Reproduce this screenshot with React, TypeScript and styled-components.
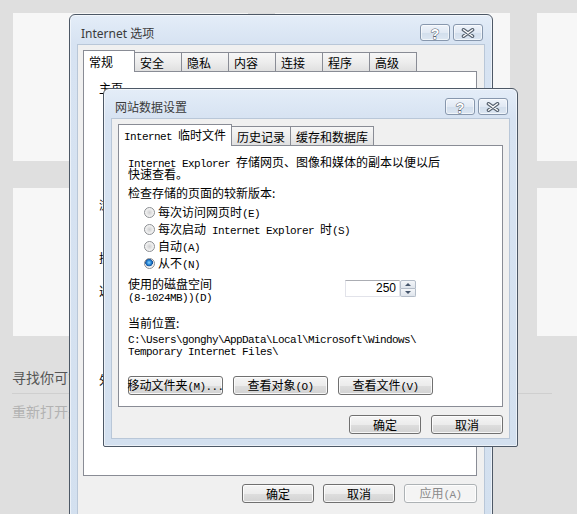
import styled, { createGlobalStyle } from "styled-components";

const GlobalStyle = createGlobalStyle`
  html, body {
    margin: 0;
    padding: 0;
    height: 100%;
    overflow: hidden;
  }
  body {
    background: #dfdfdf;
    font-family: "Noto Sans", "Noto Sans CJK SC", sans-serif;
  }
`;

const Desktop = styled.div`
  position: relative;
  width: 577px;
  height: 514px;
  overflow: hidden;
  background: #dfdfdf;
`;

/* new tab page behind the dialogs */
const Page = styled.div`
  padding: 13px 0 0 13px;
`;

const CardGrid = styled.div`
  display: grid;
  grid-template-columns: repeat(3, 235px);
  grid-auto-rows: 148px;
  gap: 27px;
`;

const Card = styled.div`
  background: #f7f7f7;
`;

const Section = styled.div`
  margin: 31px 0 0 -1px;
  width: 540px;
`;

const SectionTitle = styled.div`
  font-family: "Noto Sans CJK SC", sans-serif;
  font-size: 14px;
  line-height: 20px;
  color: #555;
`;

const Divider = styled.div`
  height: 1px;
  margin-top: 6px;
  background: #cfcfcf;
`;

const SectionHint = styled.div`
  margin-top: 7px;
  font-family: "Noto Sans CJK SC", sans-serif;
  font-size: 14px;
  line-height: 20px;
  color: #b2b2b2;
`;

/* dialog windows */
const Window = styled.div<{ $x: number; $y: number; $w: number; $h: number }>`
  position: absolute;
  left: ${(p) => p.$x}px;
  top: ${(p) => p.$y}px;
  width: ${(p) => p.$w}px;
  height: ${(p) => p.$h}px;
  box-sizing: border-box;
  display: flex;
  flex-direction: column;
  padding: 0 7px 7px;
  border: 1px solid #4d5866;
  border-radius: 6px 6px 2px 2px;
  background: linear-gradient(180deg, #e4edf8 0%, #d7e3f2 28px, #d3e0ef 100%);
  box-shadow: inset 0 0 0 1px rgba(255, 255, 255, 0.55);
  font-family: "Noto Sans CJK SC", sans-serif;
  color: #000;
`;

const TitleBar = styled.div`
  height: 29px;
  flex: none;
  display: flex;
  justify-content: space-between;
  align-items: flex-start;
  margin-right: 2px;
`;

const Caption = styled.div`
  padding: 10px 0 0 4px;
  font-family: "Noto Sans", "Noto Sans CJK SC", sans-serif;
  font-size: 12px;
  line-height: 17px;
  color: #3a3a3a;
`;

const CaptionButtons = styled.div`
  display: flex;
  gap: 3px;
  padding-top: 9px;
`;

const CaptionButton = styled.div`
  width: 30px;
  height: 17px;
  box-sizing: border-box;
  display: flex;
  align-items: center;
  justify-content: center;
  border: 1px solid #8797ad;
  border-radius: 3px;
  background: linear-gradient(180deg, #eef3fa 0%, #e1e9f4 50%, #d2deec 51%, #dce6f2 100%);
  box-shadow: inset 0 0 0 1px rgba(255, 255, 255, 0.6);
`;

const HelpGlyph = () => (
  <svg width="12" height="14" viewBox="0 0 12 14">
    <text
      x="6"
      y="12.5"
      textAnchor="middle"
      fontFamily="Liberation Sans, sans-serif"
      fontWeight="bold"
      fontSize="14"
      fill="#fff"
      stroke="#56616f"
      strokeWidth="1"
      paintOrder="stroke"
    >
      ?
    </text>
  </svg>
);

const CloseGlyph = () => (
  <svg width="14" height="10" viewBox="0 0 14 10">
    <path d="M2.5 1.8 L11.5 8.2 M11.5 1.8 L2.5 8.2" stroke="#56616f" strokeWidth="3.6" strokeLinecap="round" />
    <path d="M2.5 1.8 L11.5 8.2 M11.5 1.8 L2.5 8.2" stroke="#fff" strokeWidth="1.4" strokeLinecap="round" />
  </svg>
);

const Client = styled.div<{ $pad: string }>`
  flex: 1;
  display: flex;
  flex-direction: column;
  padding: ${(p) => p.$pad};
  border: 1px solid #b9c7d8;
  background: #f0f0f0;
  overflow: hidden;
`;

const TabStrip = styled.div`
  height: 21px;
  flex: none;
  display: flex;
  align-items: flex-end;
  position: relative;
  z-index: 2;
`;

const Tab = styled.div<{ $active?: boolean; $w?: number }>`
  box-sizing: border-box;
  height: ${(p) => (p.$active ? 22 : 19)}px;
  ${(p) => (p.$w ? `width: ${p.$w}px;` : "")}
  margin: 0 -1px ${(p) => (p.$active ? -1 : 0)}px 0;
  padding: 1px 5px 0;
  display: flex;
  align-items: center;
  border: 1px solid #898c95;
  border-bottom: none;
  position: relative;
  z-index: ${(p) => (p.$active ? 2 : 1)};
  background: ${(p) =>
    p.$active ? "#fff" : "linear-gradient(180deg, #f7f7f7 0%, #ececec 55%, #e0e0e0 100%)"};
  font-size: 12px;
  line-height: 12px;
  white-space: pre;
`;

const Panel = styled.div<{ $h: number; $pad: string }>`
  box-sizing: border-box;
  height: ${(p) => p.$h}px;
  flex: none;
  padding: ${(p) => p.$pad};
  border: 1px solid #898c95;
  background: #fff;
  font-size: 12px;
  line-height: 12px;
  overflow: hidden;
`;

const Mono = styled.span`
  font-family: "Liberation Mono", monospace;
  font-size: 11px;
  letter-spacing: -0.6px;
`;

const GroupLabel = styled.div<{ $gap: number }>`
  height: 12px;
  margin-top: ${(p) => p.$gap}px;
  white-space: nowrap;
`;

const Para = styled.div<{ $gap?: number; $h?: number }>`
  height: ${(p) => p.$h ?? 12}px;
  margin-top: ${(p) => p.$gap ?? 0}px;
  white-space: pre;
`;

const RadioList = styled.div`
  margin-top: 5px;
  padding-left: 16px;
  display: flex;
  flex-direction: column;
`;

const RadioRow = styled.div`
  height: 17px;
  display: flex;
  align-items: center;
  gap: 3px;
  white-space: pre;
`;

const Radio = styled.span<{ $checked?: boolean }>`
  width: 11px;
  height: 11px;
  flex: none;
  box-sizing: border-box;
  border-radius: 50%;
  border: 1px solid #8b8e92;
  background: ${(p) =>
    p.$checked
      ? "radial-gradient(circle at 45% 40%, #8fd4fa 0, #2c8ddc 2px, #124f9a 3.6px, #e9e9e9 4px, #fafafa 5px)"
      : "radial-gradient(circle at 50% 50%, #cfd0d2 0, #e6e6e6 2.6px, #f1f1f1 3.8px, #fbfbfb 5px)"};
`;

const DiskRow = styled.div`
  margin-top: 6px;
  display: flex;
  align-items: flex-start;
`;

const DiskLabel = styled.div`
  width: 217px;
  flex: none;
`;

const Spinner = styled.div`
  margin-top: 2px;
  display: flex;
`;

const SpinInput = styled.div`
  width: 55px;
  height: 17px;
  box-sizing: border-box;
  padding-right: 3px;
  border: 1px solid #e2e3ea;
  border-top-color: #abadb3;
  background: #fff;
  text-align: right;
  font-family: "Liberation Sans", sans-serif;
  font-size: 12px;
  line-height: 15px;
`;

const SpinButtons = styled.div`
  width: 16px;
  height: 17px;
  display: flex;
  flex-direction: column;
`;

const SpinHalf = styled.div<{ $down?: boolean }>`
  flex: 1;
  display: flex;
  align-items: center;
  justify-content: center;
  border: 1px solid #b3bcc8;
  ${(p) => (p.$down ? "border-top: none;" : "")}
  border-radius: ${(p) => (p.$down ? "0 0 2px 2px" : "2px 2px 0 0")};
  background: linear-gradient(180deg, #f4f6f9 0%, #dfe5ec 100%);

  &::after {
    content: "";
    border-left: 3px solid transparent;
    border-right: 3px solid transparent;
    ${(p) => (p.$down ? "border-top: 3px solid #45556b;" : "border-bottom: 3px solid #45556b;")}
  }
`;

const ButtonRow = styled.div<{ $gap: number; $top: number; $end?: boolean }>`
  margin-top: ${(p) => p.$top}px;
  display: flex;
  justify-content: ${(p) => (p.$end ? "flex-end" : "flex-start")};
  gap: ${(p) => p.$gap}px;
`;

const Button = styled.div<{ $w: number; $disabled?: boolean }>`
  width: ${(p) => p.$w}px;
  height: 19px;
  box-sizing: border-box;
  display: flex;
  align-items: center;
  justify-content: center;
  border: 1px solid ${(p) => (p.$disabled ? "#adb2b5" : "#707070")};
  border-radius: 3px;
  background: ${(p) =>
    p.$disabled
      ? "#f4f4f4"
      : "linear-gradient(180deg, #f5f5f5 0%, #ececec 50%, #dedede 51%, #d2d2d2 100%)"};
  box-shadow: inset 0 0 0 1px rgba(255, 255, 255, 0.8);
  color: ${(p) => (p.$disabled ? "#8a8a8a" : "#000")};
  font-size: 12px;
  line-height: 12px;
  white-space: pre;
`;

const outerTabs = ["安全", "隐私", "内容", "连接", "程序", "高级"];

export default function App() {
  return (
    <Desktop>
      <GlobalStyle />
      <Page>
        <CardGrid>
          {Array.from({ length: 6 }, (_, i) => (
            <Card key={i} />
          ))}
        </CardGrid>
        <Section>
          <SectionTitle>寻找你可能需要的内容</SectionTitle>
          <Divider />
          <SectionHint>重新打开关闭的标签页</SectionHint>
        </Section>
      </Page>

      <Window $x={69} $y={14} $w={424} $h={530}>
        <TitleBar>
          <Caption>Internet 选项</Caption>
          <CaptionButtons>
            <CaptionButton><HelpGlyph /></CaptionButton>
            <CaptionButton><CloseGlyph /></CaptionButton>
          </CaptionButtons>
        </TitleBar>
        <Client $pad="5px 7px 0 5px">
          <TabStrip>
            <Tab $active $w={52}>常规</Tab>
            {outerTabs.map((t) => (
              <Tab key={t} $w={48}>{t}</Tab>
            ))}
          </TabStrip>
          <Panel $h={405} $pad="10px 13px 10px 15px">
            <GroupLabel $gap={0}>主页</GroupLabel>
            <GroupLabel $gap={105}>浏览历史记录</GroupLabel>
            <GroupLabel $gap={41}>搜索</GroupLabel>
            <GroupLabel $gap={21}>选项卡</GroupLabel>
            <GroupLabel $gap={77}>外观</GroupLabel>
          </Panel>
          <ButtonRow $gap={9} $top={8} $end>
            <Button $w={72}>确定</Button>
            <Button $w={72}>取消</Button>
            <Button $w={73} $disabled><span>应用<Mono>(A)</Mono></span></Button>
          </ButtonRow>
        </Client>
      </Window>

      <Window $x={103} $y={88} $w={415} $h={359}>
        <TitleBar>
          <Caption>网站数据设置</Caption>
          <CaptionButtons>
            <CaptionButton><HelpGlyph /></CaptionButton>
            <CaptionButton><CloseGlyph /></CaptionButton>
          </CaptionButtons>
        </TitleBar>
        <Client $pad="5px 6px 0 6px">
          <TabStrip>
            <Tab $active><span><Mono>Internet </Mono>临时文件</span></Tab>
            <Tab>历史记录</Tab>
            <Tab>缓存和数据库</Tab>
          </TabStrip>
          <Panel $h={262} $pad="10px 9px 0">
            <Para><Mono>Internet Explorer </Mono>存储网页、图像和媒体的副本以便以后</Para>
            <Para>快速查看。</Para>
            <Para $gap={7}>检查存储的页面的较新版本:</Para>
            <RadioList>
              <RadioRow><Radio /><span>每次访问网页时<Mono>(E)</Mono></span></RadioRow>
              <RadioRow><Radio /><span>每次启动<Mono> Internet Explorer </Mono>时<Mono>(S)</Mono></span></RadioRow>
              <RadioRow><Radio /><span>自动<Mono>(A)</Mono></span></RadioRow>
              <RadioRow><Radio $checked /><span>从不<Mono>(N)</Mono></span></RadioRow>
            </RadioList>
            <DiskRow>
              <DiskLabel>
                <Para>使用的磁盘空间</Para>
                <Para $h={13}><Mono>(8-1024MB))(D)</Mono></Para>
              </DiskLabel>
              <Spinner>
                <SpinInput>250</SpinInput>
                <SpinButtons>
                  <SpinHalf />
                  <SpinHalf $down />
                </SpinButtons>
              </Spinner>
            </DiskRow>
            <Para $gap={14}>当前位置:</Para>
            <Para $gap={3}><Mono>C:\Users\gonghy\AppData\Local\Microsoft\Windows\</Mono></Para>
            <Para><Mono>Temporary Internet Files\</Mono></Para>
            <ButtonRow $gap={10} $top={20}>
              <Button $w={95}><span>移动文件夹<Mono>(M)...</Mono></span></Button>
              <Button $w={95}><span>查看对象<Mono>(O)</Mono></span></Button>
              <Button $w={95}><span>查看文件<Mono>(V)</Mono></span></Button>
            </ButtonRow>
          </Panel>
          <ButtonRow $gap={10} $top={8} $end>
            <Button $w={72}>确定</Button>
            <Button $w={72}>取消</Button>
          </ButtonRow>
        </Client>
      </Window>
    </Desktop>
  );
}
